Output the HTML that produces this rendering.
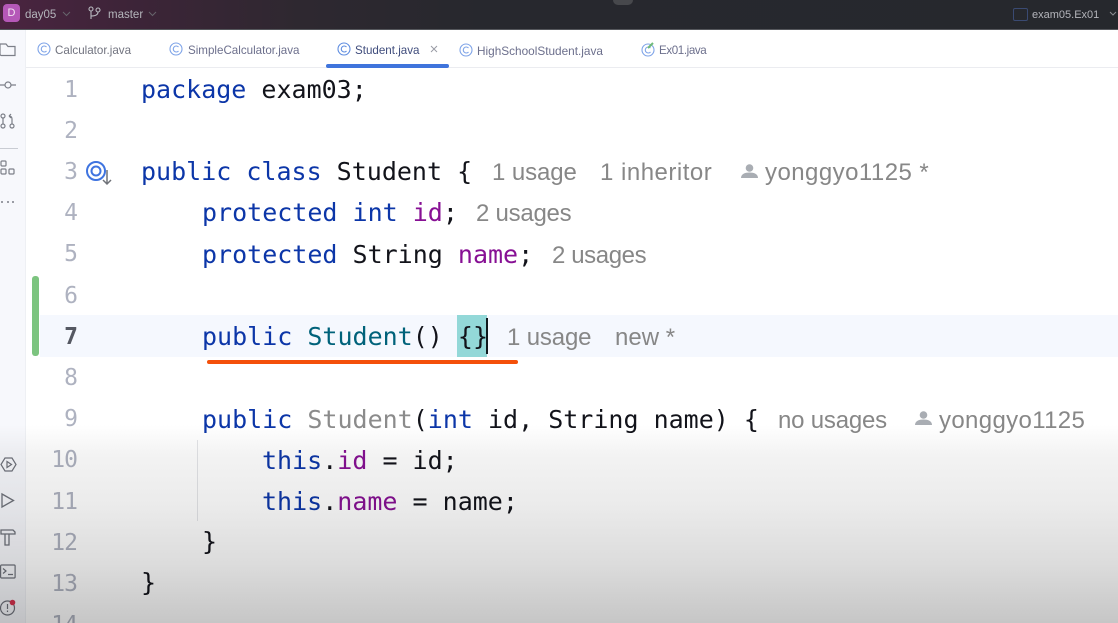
<!DOCTYPE html>
<html lang="en"><head><meta charset="utf-8"><title>Student.java</title>
<style>
html,body{margin:0;padding:0;width:1118px;height:623px;overflow:hidden;background:#fff}
#r{position:relative;width:1118px;height:623px;overflow:hidden;background:#fff;font-family:"Liberation Sans",sans-serif}
.a{position:absolute}
#top{left:0;top:0;width:1118px;height:30px;background:linear-gradient(90deg,#4a2440 0,#3d2438 130px,#2e2830 300px,#27282e 480px,#26282d 100%);border-bottom:1px solid #55575c;box-sizing:border-box}
.t{position:absolute;top:8px;font-size:11.5px;line-height:14px;color:#b4b5bb;white-space:pre}
.tab{position:absolute;top:44px;font-size:11.6px;line-height:14px;white-space:pre;color:#6c6f8c}
.l{position:absolute;left:141px;height:41px;line-height:41px;font-family:"DejaVu Sans Mono","Liberation Mono",monospace;font-size:25px;white-space:pre;color:#12131a}
.k{color:#0c36a8}.f{color:#871094}.m{color:#00627a}.g{color:#8b8b8b}
.n{position:absolute;left:30px;width:47px;text-align:right;height:41px;line-height:41px;font-family:"DejaVu Sans Mono","Liberation Mono",monospace;font-size:23px;letter-spacing:-1px;color:#aeb2c0}
.h{position:absolute;height:41px;line-height:41px;font-size:24px;color:#878787;white-space:pre}
svg{position:absolute;overflow:visible}
</style></head><body><div id="r">

<div class="a" id="top"></div>
<div class="a" style="left:3px;top:4px;width:17px;height:18px;border-radius:4px;background:#b558b8;color:#f3e3f3;font-size:11px;line-height:18px;text-align:center">D</div>
<div class="t" style="left:25px">day05</div>
<svg style="left:62px;top:11px" width="9" height="6" fill="none" stroke="#66646b"><path d="M1 1l3.5 3.5L8 1"/></svg>
<svg style="left:88px;top:6px" width="14" height="15" fill="none" stroke="#b9bac0" stroke-width="1.1"><circle cx="3" cy="3" r="2"/><circle cx="10" cy="4" r="2"/><path d="M3 5v8M3 10c4 0 7-1 7-4"/></svg>
<div class="t" style="left:108px">master</div>
<svg style="left:148px;top:11px" width="9" height="6" fill="none" stroke="#66646b"><path d="M1 1l3.5 3.5L8 1"/></svg>
<div class="a" style="left:613px;top:0;width:20px;height:5px;background:#47484c;border-radius:0 0 6px 6px"></div>
<div class="a" style="left:1013px;top:8px;width:13px;height:11px;border:1px solid #3a4a72;border-radius:2px"></div>
<div class="t" style="left:1032px;font-size:11px">exam05.Ex01</div>
<svg style="left:1109px;top:11px" width="8" height="6" fill="none" stroke="#8b8d92"><path d="M1 1l3 3 3-3"/></svg>

<div class="a" style="left:0;top:30px;width:26px;height:593px;background:#f7f8fc;border-right:1px solid #eef0f4;box-sizing:border-box"></div>
<div class="a" style="left:26px;top:67px;width:1092px;height:1px;background:#ebecf0"></div>

<svg style="left:0;top:42px" width="16" height="15" fill="none" stroke="#7c7f88" stroke-width="1.2"><path d="M0 2h6l2 2.500h7v9H1.500A1.500 1.500 0 0 1 0 12z"/></svg>
<svg style="left:0;top:80px" width="17" height="10" fill="none" stroke="#7c7f88" stroke-width="1.2"><circle cx="8" cy="5" r="3"/><path d="M0 5h5M11 5h5"/></svg>
<svg style="left:0;top:113px" width="16" height="18" fill="none" stroke="#7c7f88" stroke-width="1.2"><circle cx="3" cy="3" r="2"/><circle cx="3" cy="13" r="2"/><circle cx="12" cy="13" r="2"/><path d="M3 5v6M12 11V6q0-3-3-3M9 3l2-2M9 3l2 2"/></svg>
<div class="a" style="left:0;top:148px;width:18px;height:1px;background:#c9ccd3"></div>
<svg style="left:0;top:160px" width="16" height="16" fill="none" stroke="#7c7f88" stroke-width="1.2"><rect x="1" y="1" width="5" height="5" rx="1"/><rect x="1" y="9" width="5" height="5" rx="1"/><rect x="9" y="9" width="5" height="5" rx="1"/></svg>
<svg style="left:0;top:200px" width="16" height="4" fill="#7c7f88"><circle cx="2" cy="2" r="1"/><circle cx="8" cy="2" r="1"/><circle cx="13" cy="2" r="1"/></svg>
<svg style="left:0;top:456px" width="17" height="17" fill="none" stroke="#6f727b" stroke-width="1.2"><path d="M5 2h7l4 6.500L12 15H5L1 8.500z"/><path d="M7 5.500l4.500 3L7 11.500z"/></svg>
<svg style="left:0;top:492px" width="16" height="17" fill="none" stroke="#6f727b" stroke-width="1.3"><path d="M2 2l11.500 6.500L2 15z"/></svg>
<svg style="left:0;top:528px" width="16" height="18" fill="none" stroke="#6f727b" stroke-width="1.3"><path d="M1 2h12l2 2v2H1zM5 6v11h4V6"/></svg>
<svg style="left:0;top:564px" width="16" height="15" fill="none" stroke="#6f727b" stroke-width="1.2"><rect x=".6" y="1" width="14.500" height="13" rx="1"/><path d="M3 4.500l3 2.500-3 2.500M8 10.500h5"/></svg>
<svg style="left:0;top:599px" width="17" height="18" fill="none" stroke="#6f727b" stroke-width="1.2"><circle cx="7.500" cy="9" r="7"/><path d="M7.500 5v5M7.500 11.500v1.500"/><circle cx="12.500" cy="3.500" r="2.800" fill="#d8324f" stroke="none"/></svg>

<svg style="left:37px;top:42px" width="14" height="14" fill="none" stroke="#7fa4e8" stroke-width="1.1"><circle cx="7" cy="7" r="6"/><path d="M9.500 5A3 3 0 1 0 9.500 9"/></svg>
<div class="tab" style="left:55px;color:#71737f">Calculator.java</div>
<svg style="left:169px;top:42px" width="14" height="14" fill="none" stroke="#7fa4e8" stroke-width="1.1"><circle cx="7" cy="7" r="6"/><path d="M9.500 5A3 3 0 1 0 9.500 9"/></svg>
<div class="tab" style="left:188px">SimpleCalculator.java</div>
<svg style="left:337px;top:42px" width="14" height="14" fill="none" stroke="#5f8de0" stroke-width="1.1"><circle cx="7" cy="7" r="6"/><path d="M9.500 5A3 3 0 1 0 9.500 9"/></svg>
<div class="tab" style="left:355px;color:#3f4c7c">Student.java</div>
<svg style="left:430px;top:45px" width="8" height="8" fill="none" stroke="#9a9ca5"><path d="M1 1l6 6M7 1L1 7"/></svg>
<div class="a" style="left:326px;top:64px;width:123px;height:4px;border-radius:2px;background:#3f74dc"></div>
<svg style="left:459px;top:43px" width="14" height="14" fill="none" stroke="#7fa4e8" stroke-width="1.1"><circle cx="7" cy="7" r="6"/><path d="M9.500 5A3 3 0 1 0 9.500 9"/></svg>
<div class="tab" style="left:477px;font-size:11.8px">HighSchoolStudent.java</div>
<svg style="left:641px;top:43px" width="14" height="14" fill="none" stroke="#7fa4e8" stroke-width="1.1"><circle cx="7" cy="7" r="6"/><path d="M9.500 5A3 3 0 1 0 9.500 9"/><path d="M7 5l5-5" stroke="#6fba78" stroke-width="2"/></svg>
<div class="tab" style="left:659px;letter-spacing:-.4px">Ex01.java</div>

<div class="a" style="left:40px;top:315px;width:1078px;height:42px;background:#f5f8fe"></div>
<div class="a" style="left:32px;top:276px;width:7px;height:80px;border-radius:3px;background:#7cc47f"></div>
<div class="a" style="left:457px;top:315px;width:30px;height:42px;background:#93d8d8"></div>
<div class="a" style="left:486px;top:318px;width:2px;height:36px;background:#10181c"></div>
<div class="a" style="left:207px;top:360px;width:311px;height:4px;border-radius:2px;background:#f4500a"></div>
<div class="a" style="left:197px;top:440px;width:1px;height:81px;background:#e4e5e8"></div>

<div class="n" style="top:70px">1</div>
<div class="n" style="top:111px">2</div>
<div class="n" style="top:152px">3</div>
<div class="n" style="top:193px">4</div>
<div class="n" style="top:234px">5</div>
<div class="n" style="top:276px">6</div>
<div class="n" style="top:317px;color:#555862;font-weight:bold">7</div>
<div class="n" style="top:358px">8</div>
<div class="n" style="top:399px">9</div>
<div class="n" style="top:440px">10</div>
<div class="n" style="top:482px">11</div>
<div class="n" style="top:523px">12</div>
<div class="n" style="top:564px">13</div>
<div class="n" style="top:605px">14</div>

<svg style="left:85px;top:160px" width="29" height="27" fill="none"><circle cx="11" cy="11" r="9" stroke="#3f74e0" stroke-width="2"/><circle cx="11" cy="11" r="4.500" stroke="#3f74e0" stroke-width="2"/><path d="M22 10v14M18 20l4 4 4-4" stroke="#6f7278" stroke-width="1.500"/></svg>

<div class="l" style="top:69px"><span class="k">package</span> exam03;</div>
<div class="l" style="top:151px"><span class="k">public class</span> Student {</div>
<div class="h" style="top:152px;left:492px;letter-spacing:-.1px">1 usage</div>
<div class="h" style="top:152px;left:600px;letter-spacing:.5px">1 inheritor</div>
<svg style="left:741px;top:164px" width="17" height="15" fill="#a9adb3"><circle cx="8.500" cy="4" r="3.800"/><path d="M0 14c0-4 4-5.500 8.500-5.500S17 10 17 14z"/></svg>
<div class="h" style="top:152px;left:765px;letter-spacing:.45px">yonggyo1125 *</div>
<div class="l" style="top:192px;left:202px"><span class="k">protected int</span> <span class="f">id</span>;</div>
<div class="h" style="top:193px;left:476px;letter-spacing:-.25px">2 usages</div>
<div class="l" style="top:234px;left:202px"><span class="k">protected</span> String <span class="f">name</span>;</div>
<div class="h" style="top:235px;left:552px;letter-spacing:-.4px">2 usages</div>
<div class="l" style="top:316px;left:202px"><span class="k">public</span> <span class="m">Student</span>() {}</div>
<div class="h" style="top:317px;left:507px;letter-spacing:-.15px">1 usage</div>
<div class="h" style="top:317px;left:615px">new *</div>
<div class="l" style="top:399px;left:202px"><span class="k">public</span> <span class="g">Student</span>(<span class="k">int</span> id, String name) {</div>
<div class="h" style="top:400px;left:778px;letter-spacing:-.2px">no usages</div>
<svg style="left:915px;top:411px" width="17" height="15" fill="#a9adb3"><circle cx="8.500" cy="4" r="3.800"/><path d="M0 14c0-4 4-5.500 8.500-5.500S17 10 17 14z"/></svg>
<div class="h" style="top:400px;left:939px;letter-spacing:.35px">yonggyo1125</div>
<div class="l" style="top:440px;left:262px"><span class="k">this</span>.<span class="f">id</span> = id;</div>
<div class="l" style="top:481px;left:262px"><span class="k">this</span>.<span class="f">name</span> = name;</div>
<div class="l" style="top:521px;left:202px">}</div>
<div class="l" style="top:562px">}</div>

<div class="a" style="left:0;top:425px;width:1118px;height:198px;mix-blend-mode:multiply;background:linear-gradient(180deg,#fff 0,#f3f3f3 15%,#ebebeb 40%,#dcdcdc 70%,#c6c6c6 100%)"></div>
</div></body></html>
